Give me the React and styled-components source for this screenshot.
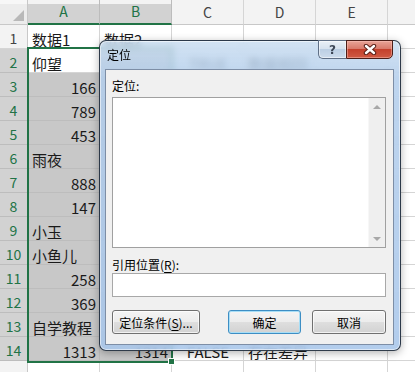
import React from "react"
import styled, { createGlobalStyle } from "styled-components"

const GlobalStyle = createGlobalStyle`
  html, body {
    margin: 0;
    padding: 0;
    background: #fff;
  }
  body {
    font-family: "Noto Sans CJK SC", "Noto Sans", sans-serif;
  }
`

const COLS = ["A", "B", "C", "D", "E", ""]
const WIDTHS = [72, 72, 72, 72, 72, 60]

const ROWS = [
  ["数据1", "数据2"],
  ["仰望", "", "TRUE", "数据相同"],
  [166],
  [789],
  [453],
  ["雨夜"],
  [888],
  [147],
  ["小玉"],
  ["小鱼儿"],
  [258],
  [369],
  ["自学教程"],
  [1313, 1314, "FALSE", "存在差异"],
  [],
]

const isSelected = (r, c) => r >= 2 && r <= 14 && c <= 1 && !(r === 2 && c === 0)

const alignOf = (v) => {
  if (typeof v === "number") return "right"
  if (v === "TRUE" || v === "FALSE") return "center"
  return "left"
}

const App = () => {
  return (
    <>
      <GlobalStyle />
      <Sheet>
        <HeaderRow>
          <Corner>
            <CornerMark />
          </Corner>
          {COLS.map((c, i) => (
            <ColHead key={i} $w={WIDTHS[i]} $sel={i < 2}>
              {c}
            </ColHead>
          ))}
        </HeaderRow>
        {ROWS.map((row, ri) => {
          const r = ri + 1
          return (
            <Row key={r}>
              {/* last row is cut by the window edge, its number is not visible */}
              <RowHead $sel={r >= 2 && r <= 14}>{r <= 14 ? r : ""}</RowHead>
              {WIDTHS.map((w, ci) => {
                const v = row[ci]
                return (
                  <Cell key={ci} $w={w} $sel={isSelected(r, ci)} $align={alignOf(v)}>
                    {v}
                  </Cell>
                )
              })}
            </Row>
          )
        })}
        <Selection />
        <FillHandle />

        <Dialog>
          <TitleBar>
            <Title>定位</Title>
            <CaptionButtons>
              <HelpButton>?</HelpButton>
              <CloseButton>
                <svg width="14" height="11" viewBox="0 0 14 11">
                  <path d="M3 2 L11 9 M11 2 L3 9" stroke="#5a2018" strokeWidth="4.4" strokeLinecap="round" />
                  <path d="M3 2 L11 9 M11 2 L3 9" stroke="#fff" strokeWidth="2.4" strokeLinecap="round" />
                </svg>
              </CloseButton>
            </CaptionButtons>
          </TitleBar>
          <Client>
            <Label>定位:</Label>
            <ListBox>
              <ListArea />
              <ScrollBar>
                <ScrollBtn>
                  <Arrow $dir="up" />
                </ScrollBtn>
                <ScrollBtn>
                  <Arrow $dir="down" />
                </ScrollBtn>
              </ScrollBar>
            </ListBox>
            <Label $gap>
              引用位置(<u>R</u>):
            </Label>
            <Input />
            <ButtonRow>
              <Button $w={88}>
                定位条件(<u>S</u>)...
              </Button>
              <RightButtons>
                <Button $w={73} $default>
                  确定
                </Button>
                <Button $w={74}>取消</Button>
              </RightButtons>
            </ButtonRow>
          </Client>
        </Dialog>
      </Sheet>
    </>
  )
}

const Sheet = styled.div`
  position: relative;
  width: 415px;
  height: 372px;
  overflow: hidden;
  background: #fff;
  color: #1a1a1a;
`

const HeaderRow = styled.div`
  display: flex;
  height: 25px;
  background: #f3f3f3;
`

const Corner = styled.div`
  position: relative;
  flex: 0 0 28px;
  box-sizing: border-box;
  border-right: 1px solid #c8c8c8;
  border-bottom: 1px solid #c8c8c8;
  background: linear-gradient(#f7f7f7 0 4px, #ececec 4px);
  display: flex;
  align-items: flex-end;
  justify-content: flex-end;
  padding: 0 3px 3px 0;
`

const CornerMark = styled.div`
  width: 0;
  height: 0;
  border-left: 11px solid transparent;
  border-bottom: 11px solid #b9b9b9;
`

const ColHead = styled.div`
  flex: 0 0 ${(p) => p.$w}px;
  box-sizing: border-box;
  height: 25px;
  display: flex;
  align-items: flex-end;
  justify-content: center;
  padding-bottom: 4px;
  font-size: 14px;
  line-height: 16px;
  border-right: 1px solid ${(p) => (p.$sel ? "#bcbcbc" : "#d5d5d5")};
  border-bottom: ${(p) => (p.$sel ? "2px solid #217346" : "1px solid #c8c8c8")};
  background: ${(p) => (p.$sel ? "linear-gradient(#f3f3f3 0 4px, #d2d2d2 4px)" : "#f3f3f3")};
  color: ${(p) => (p.$sel ? "#217346" : "#444")};
`

const Row = styled.div`
  display: flex;
  height: 24px;
`

const RowHead = styled.div`
  flex: 0 0 28px;
  box-sizing: border-box;
  display: flex;
  align-items: flex-end;
  justify-content: center;
  font-size: 14px;
  line-height: 16px;
  padding-bottom: 2px;
  border-right: 1px solid #c8c8c8;
  border-bottom: 1px solid ${(p) => (p.$sel ? "#bdbdbd" : "#d5d5d5")};
  background: ${(p) => (p.$sel ? "#d2d2d2" : "#f3f3f3")};
  color: ${(p) => (p.$sel ? "#217346" : "#444")};
`

const Cell = styled.div`
  flex: 0 0 ${(p) => p.$w}px;
  box-sizing: border-box;
  overflow: hidden;
  white-space: nowrap;
  display: flex;
  align-items: flex-end;
  justify-content: ${(p) =>
    p.$align === "right" ? "flex-end" : p.$align === "center" ? "center" : "flex-start"};
  padding: 0 3px 0 4px;
  font-size: 15px;
  line-height: 16px;
  border-right: 1px solid ${(p) => (p.$sel ? "#bdbdbd" : "#d5d5d5")};
  border-bottom: 1px solid ${(p) => (p.$sel ? "#bdbdbd" : "#d5d5d5")};
  background: ${(p) => (p.$sel ? "#c8c8c8" : "#fff")};
`

const Selection = styled.div`
  position: absolute;
  left: 27px;
  top: 47px;
  width: 146px;
  height: 316px;
  box-sizing: border-box;
  border: 2px solid #217346;
  pointer-events: none;
`

const FillHandle = styled.div`
  position: absolute;
  left: 168px;
  top: 358px;
  width: 7px;
  height: 7px;
  box-sizing: border-box;
  background: #217346;
  border: 1px solid #fff;
`

const Dialog = styled.div`
  position: absolute;
  left: 99px;
  top: 40px;
  width: 302px;
  height: 311px;
  box-sizing: border-box;
  display: flex;
  flex-direction: column;
  padding: 0 6px 5px 5px;
  border: 1px solid rgba(20, 30, 45, 0.85);
  border-radius: 7px;
  background: linear-gradient(
    180deg,
    rgba(200, 220, 240, 0.82) 0%,
    rgba(178, 205, 235, 0.85) 12%,
    rgba(168, 198, 234, 0.88) 100%
  );
  backdrop-filter: blur(3px);
  box-shadow: inset 0 0 0 1px rgba(255, 255, 255, 0.55), 0 2px 8px rgba(0, 0, 0, 0.3);
  font-family: "Noto Sans CJK SC", "Noto Sans", sans-serif;
  font-size: 12px;
  color: #000;
`

const TitleBar = styled.div`
  height: 28px;
  display: flex;
  align-items: flex-start;
  justify-content: space-between;
`

const Title = styled.div`
  padding: 6px 0 0 2px;
  font-size: 12px;
  line-height: 16px;
  color: #000;
`

const CaptionButtons = styled.div`
  display: flex;
  margin: -1px 1px 0 0;
`

const HelpButton = styled.div`
  width: 28px;
  height: 19px;
  box-sizing: border-box;
  display: flex;
  align-items: center;
  justify-content: center;
  border: 1px solid #5f6f86;
  border-right: none;
  border-radius: 0 0 0 5px;
  background: linear-gradient(#e9f0f7 0%, #d6e2ef 45%, #bccfe4 50%, #cddcec 100%);
  box-shadow: inset 0 0 0 1px rgba(255, 255, 255, 0.5);
  font-family: "DejaVu Sans", sans-serif;
  font-weight: bold;
  font-size: 12px;
  color: #3c4656;
`

const CloseButton = styled.div`
  width: 47px;
  height: 19px;
  box-sizing: border-box;
  display: flex;
  align-items: center;
  justify-content: center;
  border: 1px solid #4c1e18;
  border-radius: 0 0 5px 0;
  background: linear-gradient(#e8a497 0%, #d87a6b 45%, #c4402c 50%, #cf5a44 100%);
  box-shadow: inset 0 0 0 1px rgba(255, 200, 190, 0.45);
`

const Client = styled.div`
  flex: 1;
  box-sizing: border-box;
  display: flex;
  flex-direction: column;
  padding: 8px 7px 0 6px;
  background: #f0f0f0;
  border: 1px solid #7d8ea6;
`

const Label = styled.div`
  font-size: 12px;
  line-height: 16px;
  margin: ${(p) => (p.$gap ? "9px 0 0" : "0 0 3px")};
  u {
    text-decoration: underline;
    text-underline-offset: 2px;
  }
`

const ListBox = styled.div`
  height: 151px;
  box-sizing: border-box;
  display: flex;
  border: 1px solid #a0a0a0;
  background: #fff;
`

const ListArea = styled.div`
  flex: 1;
`

const ScrollBar = styled.div`
  flex: 0 0 16px;
  display: flex;
  flex-direction: column;
  justify-content: space-between;
  background: #efefef;
  border-left: 1px solid #f7f7f7;
`

const ScrollBtn = styled.div`
  height: 17px;
  display: flex;
  align-items: center;
  justify-content: center;
`

const Arrow = styled.div`
  width: 0;
  height: 0;
  border-left: 4px solid transparent;
  border-right: 4px solid transparent;
  ${(p) => (p.$dir === "up" ? "border-bottom: 4px solid #a8a8a8;" : "border-top: 4px solid #a8a8a8;")}
`

const Input = styled.div`
  height: 24px;
  box-sizing: border-box;
  border: 1px solid #a8a8a8;
  background: #fff;
`

const ButtonRow = styled.div`
  display: flex;
  justify-content: space-between;
  margin-top: 13px;
`

const RightButtons = styled.div`
  display: flex;
  gap: 11px;
`

const Button = styled.div`
  width: ${(p) => p.$w}px;
  height: 24px;
  box-sizing: border-box;
  display: flex;
  align-items: center;
  justify-content: center;
  font-size: 12px;
  color: #000;
  border: 1px solid ${(p) => (p.$default ? "#3d8ec4" : "#707070")};
  border-radius: 3px;
  background: linear-gradient(#f4f4f4 0%, #ececec 50%, #dedede 52%, #d2d2d2 100%);
  box-shadow: inset 0 0 0 1px ${(p) => (p.$default ? "#a8def6" : "rgba(255,255,255,0.7)")};
  u {
    text-decoration: underline;
    text-underline-offset: 2px;
  }
`

export default App
